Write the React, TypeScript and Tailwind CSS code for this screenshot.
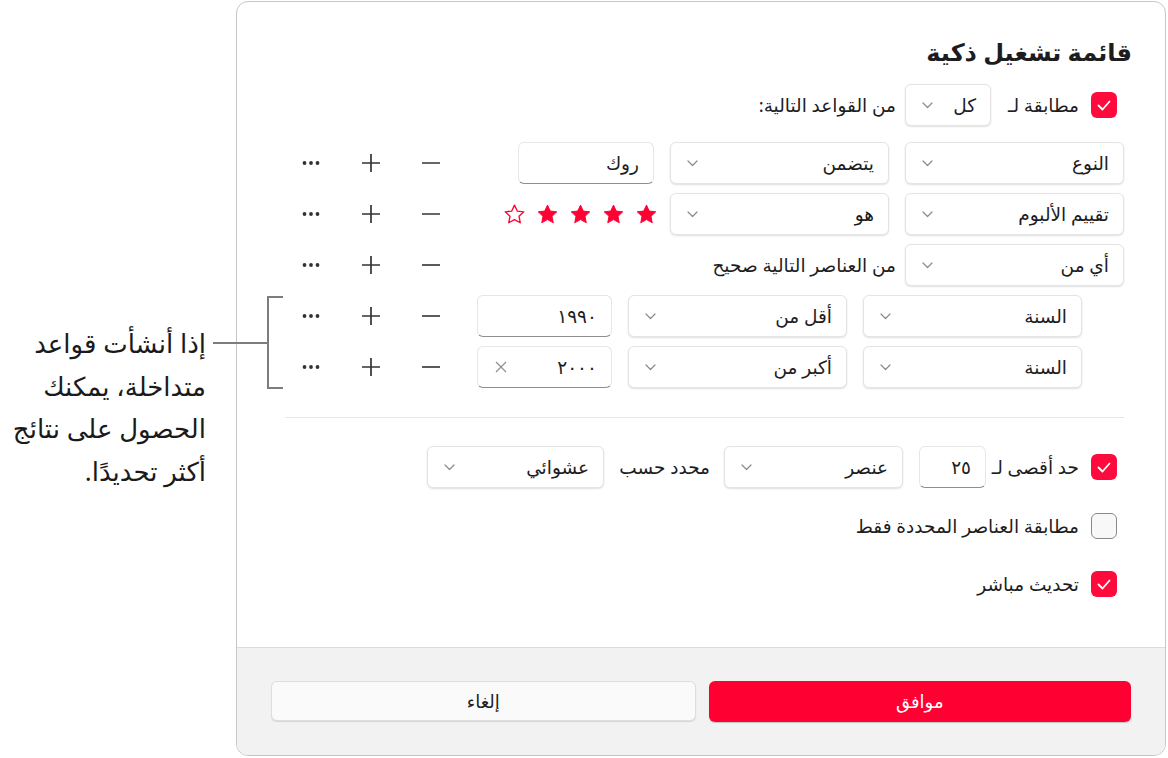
import React from 'react';

const font = "font-['Noto_Sans','DejaVu_Sans',sans-serif]";

function Chevron() {
  return (
    <svg width="11" height="7" viewBox="0 0 11 7" fill="none">
      <path d="M1 1l4.5 4.5L10 1" stroke="#8a8a8a" strokeWidth="1.2" strokeLinecap="round" strokeLinejoin="round" />
    </svg>
  );
}

function Dropdown({ label, width }: { label: string; width: string }) {
  return (
    <div
      className={`${width} h-[42px] shrink-0 rounded-md border border-[#e4e4e4] bg-white shadow-[0_1px_2px_rgba(0,0,0,0.13)] flex items-center justify-between pr-[14px] pl-[16px] text-[18.5px] text-[#1d1d1f] whitespace-nowrap`}
    >
      <span>{label}</span>
      <Chevron />
    </div>
  );
}

function Field({ value, width, clear }: { value: string; width: string; clear?: boolean }) {
  return (
    <div
      className={`${width} h-[42px] shrink-0 rounded-md border border-[#e6e6e6] border-b-[#8e8e8e] bg-white flex items-center justify-between pr-[14px] pl-[17px] text-[18.5px] text-[#1d1d1f]`}
    >
      <span>{value}</span>
      {clear && (
        <svg width="12" height="12" viewBox="0 0 12 12">
          <path d="M1 1l10 10M11 1L1 11" stroke="#8f8f8f" strokeWidth="1.2" />
        </svg>
      )}
    </div>
  );
}

function Checkbox({ checked }: { checked: boolean }) {
  if (!checked) {
    return <div className="w-[26px] h-[26px] shrink-0 rounded-[6px] border-[1.5px] border-[#8a8a8a] bg-[#f8f8f8]" />;
  }
  return (
    <div className="w-[26px] h-[26px] shrink-0 rounded-[6px] bg-[#ff0a3c] flex items-center justify-center">
      <svg width="14" height="11" viewBox="0 0 14 11" fill="none">
        <path d="M1.5 5.5l4 4 7-8" stroke="white" strokeWidth="1.8" strokeLinecap="round" strokeLinejoin="round" />
      </svg>
    </div>
  );
}

function Star({ filled }: { filled: boolean }) {
  return (
    <svg width="23" height="23" viewBox="0 0 24 24">
      <path
        d="M12 2.2l2.9 6.2 6.8.8-5 4.7 1.3 6.7L12 17.3l-6 3.3 1.3-6.7-5-4.7 6.8-.8z"
        fill={filled ? '#ff0033' : 'none'}
        stroke="#ff0033"
        strokeWidth={filled ? 1 : 1.4}
        strokeLinejoin="round"
      />
    </svg>
  );
}

function Actions() {
  return (
    <div className="flex items-center gap-[20px] pl-[6px] mr-auto">
      <div className="w-[40px] flex justify-center">
        <svg width="20" height="20" viewBox="0 0 20 20">
          <path d="M1 10h18" stroke="#333" strokeWidth="1.6" />
        </svg>
      </div>
      <div className="w-[40px] flex justify-center">
        <svg width="20" height="20" viewBox="0 0 20 20">
          <path d="M1 10h18M10 1v18" stroke="#333" strokeWidth="1.7" />
        </svg>
      </div>
      <div className="w-[40px] flex justify-center">
        <svg width="20" height="20" viewBox="0 0 20 20">
          <circle cx="3.5" cy="10" r="1.9" fill="#333" />
          <circle cx="10" cy="10" r="1.9" fill="#333" />
          <circle cx="16.5" cy="10" r="1.9" fill="#333" />
        </svg>
      </div>
    </div>
  );
}

export default function App() {
  return (
    <div className={`relative w-[1168px] h-[758px] bg-white ${font} text-[#1d1d1f]`}>
      {/* dialog */}
      <div
        dir="rtl"
        className="ml-[236px] mt-[1px] w-[930px] h-[755px] rounded-[12px] border border-[#c6c6c6] bg-white flex flex-col overflow-hidden"
      >
        <div className="flex-1 flex flex-col pl-[48px] pr-[41px] pt-[32px]">
          <div className="h-[36px] leading-[36px] text-[24px] font-bold -mr-[8px]">قائمة تشغيل ذكية</div>

          {/* match row */}
          <div className="mt-[14px] h-[42px] flex items-center text-[18.5px] whitespace-nowrap">
            <div className="mr-[7px]">
              <Checkbox checked />
            </div>
            <span className="mr-[12px] w-[76px]">مطابقة لـ</span>
            <div className="mr-[12px]">
              <Dropdown label="كل" width="w-[86px]" />
            </div>
            <span className="mr-[9px]">من القواعد التالية:</span>
          </div>

          {/* rules */}
          <div className="mt-[16px] flex flex-col gap-[9px]">
            <div className="h-[42px] flex items-center gap-[16px]">
              <Dropdown label="النوع" width="w-[219px]" />
              <Dropdown label="يتضمن" width="w-[219px]" />
              <Field value="روك" width="w-[136px]" />
              <Actions />
            </div>
            <div className="h-[42px] flex items-center gap-[16px]">
              <Dropdown label="تقييم الألبوم" width="w-[219px]" />
              <Dropdown label="هو" width="w-[219px]" />
              <div className="flex items-center gap-[10px] -mr-[4px]">
                <Star filled />
                <Star filled />
                <Star filled />
                <Star filled />
                <Star filled={false} />
              </div>
              <Actions />
            </div>
            <div className="h-[42px] flex items-center">
              <Dropdown label="أي من" width="w-[219px]" />
              <span className="mr-[9px] text-[18.5px] whitespace-nowrap">من العناصر التالية صحيح</span>
              <Actions />
            </div>
            <div className="h-[42px] flex items-center gap-[16px] pr-[42px]">
              <Dropdown label="السنة" width="w-[219px]" />
              <Dropdown label="أقل من" width="w-[219px]" />
              <Field value="١٩٩٠" width="w-[135px]" />
              <Actions />
            </div>
            <div className="h-[42px] flex items-center gap-[16px] pr-[42px]">
              <Dropdown label="السنة" width="w-[219px]" />
              <Dropdown label="أكبر من" width="w-[219px]" />
              <Field value="٢٠٠٠" width="w-[135px]" clear />
              <Actions />
            </div>
          </div>

          <div className="mt-[29px] h-px bg-[#e6e6e6]" />

          {/* limit row */}
          <div className="mt-[28px] h-[42px] flex items-center text-[18.5px] whitespace-nowrap">
            <div className="mr-[7px]">
              <Checkbox checked />
            </div>
            <span className="mr-[12px] w-[85px]">حد أقصى لـ</span>
            <div className="mr-[8px]">
              <Field value="٢٥" width="w-[67px]" />
            </div>
            <div className="mr-[16px]">
              <Dropdown label="عنصر" width="w-[179px]" />
            </div>
            <span className="mr-[14px] w-[90px]">محدد حسب</span>
            <div className="mr-[16px]">
              <Dropdown label="عشوائي" width="w-[177px]" />
            </div>
          </div>

          <div className="mt-[25px] h-[26px] flex items-center text-[18.5px] whitespace-nowrap">
            <div className="mr-[7px]">
              <Checkbox checked={false} />
            </div>
            <span className="mr-[12px]">مطابقة العناصر المحددة فقط</span>
          </div>

          <div className="mt-[32px] h-[26px] flex items-center text-[18.5px] whitespace-nowrap">
            <div className="mr-[7px]">
              <Checkbox checked />
            </div>
            <span className="mr-[12px]">تحديث مباشر</span>
          </div>
        </div>

        {/* footer */}
        <div className="h-[108px] shrink-0 border-t border-[#dcdcdc] bg-[#f2f2f2] flex items-start gap-[13px] px-[34px] pt-[33px]">
          <div className="flex-1 h-[41px] rounded-md bg-[#ff0033] text-white text-[18px] flex items-center justify-center shadow-[0_1px_1px_rgba(0,0,0,0.2)]">
            موافق
          </div>
          <div className="flex-1 h-[40px] rounded-md bg-[#fafafa] border border-[#dedede] text-[18px] flex items-center justify-center shadow-[0_1px_1px_rgba(0,0,0,0.12)]">
            إلغاء
          </div>
        </div>
      </div>

      {/* callout annotation */}
      <div dir="rtl" className="absolute left-0 top-[321px] w-[206px] text-right text-[26px] leading-[42.5px] text-[#1a1a1a]">
        إذا أنشأت قواعد
        <br />
        متداخلة، يمكنك
        <br />
        الحصول على نتائج
        <br />
        أكثر تحديدًا.
      </div>
      <svg className="absolute left-[210px] top-[290px]" width="80" height="104" viewBox="0 0 80 104" fill="none">
        <path d="M3 52h55M73 6H58v91h15" stroke="#7d7d7d" strokeWidth="2" />
      </svg>
    </div>
  );
}
